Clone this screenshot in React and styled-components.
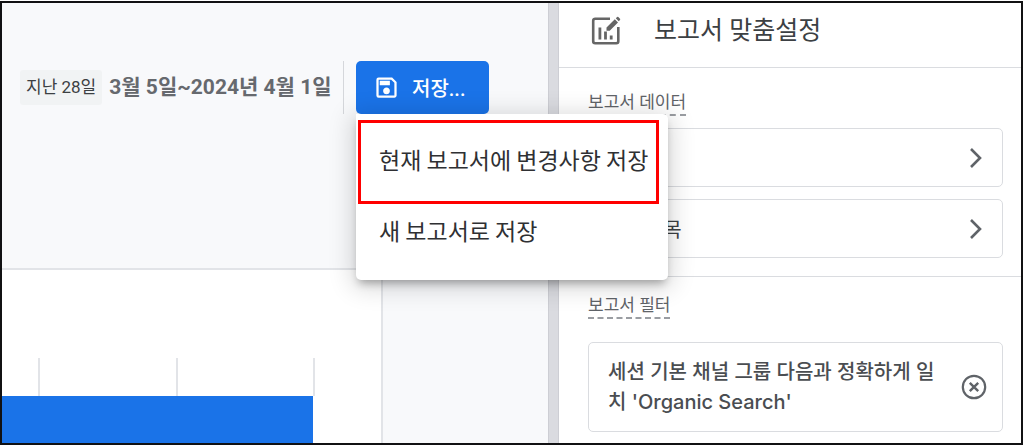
import React, {useState} from "react";
import styled, {createGlobalStyle} from "styled-components";
import {MdOutlineSave} from "react-icons/md";

const GlobalStyle = createGlobalStyle`
  * {
    box-sizing: border-box;
  }

  body {
    margin: 0;
    background-color: #ffffff;
    font-family: Roboto, "Noto Sans CJK KR", sans-serif;
    color: #3c4043;
  }

  button {
    margin: 0;
    padding: 0;
    border: none;
    background: none;
    font: inherit;
    color: inherit;
    cursor: pointer;
  }
`

const StyledPage = styled.div`
  min-height: 100vh;
  padding: 1px 1px 1px 0;
  display: flex;
`

const StyledFrame = styled.div`
  flex: 1;
  display: flex;
  border: 2px solid #111113;
`

const StyledReport = styled.main`
  flex: 13 1 0;
  min-width: 0;
  display: flex;
  flex-direction: column;
  background-color: #f8f9fb;
`

const StyledToolbar = styled.div`
  height: 265px;
  padding: 58px 0 0 18px;
  display: flex;
  align-items: flex-start;
  white-space: nowrap;

  .range {
    width: 324px;
    height: 53px;
    display: flex;
    align-items: center;
    gap: 7px;
    border-right: 1px solid #d5d7db;
  }

  .preset {
    padding: 0 6px;
    border-radius: 3px;
    background-color: #f1f3f4;
    font-size: 17px;
    line-height: 35px;
  }

  .dates {
    font-size: 21px;
    line-height: 35px;
    font-weight: 700;
    color: #66696e;
  }
`

const StyledSave = styled.div`
  position: relative;
  margin-left: 12px;
`

const StyledSaveButton = styled.button`
  height: 53px;
  padding: 0 24px 0 17px;
  display: flex;
  align-items: center;
  gap: 12px;
  border-radius: 5px;
  background-color: #1a73e8;
  color: #ffffff;
  font-size: 20px;
  font-weight: 500;
`

const StyledMenu = styled.div`
  position: absolute;
  z-index: 2;
  top: 100%;
  left: 0;
  width: 312px;
  padding: 9px 0 15px;
  display: flex;
  flex-direction: column;
  border-radius: 0 5px 5px 5px;
  background-color: #ffffff;
  box-shadow: 0 6px 8px -3px rgba(0, 0, 0, .3), 0 4px 24px 4px rgba(0, 0, 0, .16);

  .highlight {
    position: absolute;
    top: 6px;
    left: 2px;
    right: 9px;
    height: 84px;
    border: 3px solid #ff0000;
    pointer-events: none;
  }
`

const StyledMenuItem = styled.button`
  height: 71px;
  padding: 0 23px;
  text-align: left;
  font-family: "Noto Sans CJK KR", sans-serif;
  font-size: 23px;
  line-height: 32px;
  color: #2f3033;
`

const StyledChartCard = styled.section`
  flex: 1;
  margin-right: 165px;
  padding: 88px 66px 0 0;
  display: flex;
  flex-direction: column;
  border: 2px solid #e2e4e8;
  border-width: 2px 2px 0 0;
  background-color: #ffffff;

  .ticks {
    height: 38px;
    display: grid;
    grid-template-columns: 38px 1fr 1fr;
  }

  .tick {
    border-right: 2px solid #e2e4e8;
  }

  .bar {
    flex: 1;
    min-height: 40px;
    margin-right: 2px;
    background-color: #1a73e8;
  }
`

const StyledSplitter = styled.div`
  width: 11px;
  border: 1px solid #cdced4;
  border-width: 0 1px;
  background-color: #dadbe0;
`

const StyledPanel = styled.aside`
  flex: 11 1 0;
  min-width: 0;
  background-color: #ffffff;
`

const StyledPanelHeader = styled.header`
  height: 65px;
  padding: 0 18px 8px 32px;
  display: flex;
  align-items: center;
  gap: 33px;
  border-bottom: 1px solid #dadce0;

  h1 {
    margin: 0;
    font-size: 25px;
    line-height: 32px;
    font-weight: 400;
  }
`

const StyledSection = styled.section`
  padding: ${props => props.$top}px 18px 18px 29px;
  display: flex;
  flex-direction: column;
  align-items: stretch;
  gap: 12px;

  & + & {
    padding-bottom: 10px;
    border-top: 1px solid #dadce0;
  }

  h2 {
    align-self: flex-start;
    margin: 0 0 ${props => props.$labelGap}px;
    border-bottom: 2px dashed #9a9da2;
    font-size: 17px;
    line-height: 24px;
    font-weight: 400;
    color: #5f6368;
  }
`

const StyledRowButton = styled.button`
  height: 59px;
  padding: 0 19px;
  display: flex;
  align-items: center;
  justify-content: space-between;
  border: 1px solid #dadce0;
  border-radius: 5px;
  font-size: 20px;

  svg {
    margin-left: auto;
    color: #5f6368;
  }
`

const StyledFilter = styled.div`
  padding: 14px 15px 14px 19px;
  display: flex;
  align-items: center;
  justify-content: space-between;
  gap: 22px;
  border: 1px solid #dadce0;
  border-radius: 5px;
  font-family: Inter, "Noto Sans CJK KR", sans-serif;
  font-size: 20px;
  line-height: 30px;
  font-weight: 500;
  color: #4a4d51;

  p {
    margin: 0;
  }

  button {
    flex: none;
    display: flex;
    color: #5f6368;
  }
`

const CustomizeIcon = () => (
    <svg width="30" height="30" viewBox="0 0 30 30" fill="none" stroke="#666666" aria-hidden="true">
        <path d="M19 2.7H4.2a2 2 0 0 0-2 2v20.6a2 2 0 0 0 2 2h21.1a2 2 0 0 0 2-2V11" strokeWidth="2.6"/>
        <path d="M8.9 11.5v12M14.5 15.5v8M20.2 19.5v4" strokeWidth="2.8"/>
        <path d="M15.5 14.8v-3.2l8.3-8.3 3.2 3.2-8.3 8.3zM24.8 2.3l1.3-1.3q.6-.5 1.2 0l1.7 1.7q.5.6 0 1.2l-1.3 1.3z" fill="#666666" stroke="none"/>
    </svg>
)

const ChevronIcon = () => (
    <svg width="14" height="22" viewBox="0 0 14 22" fill="none" stroke="currentColor" aria-hidden="true">
        <path d="M2 2l9 9-9 9" strokeWidth="2.6"/>
    </svg>
)

const RemoveIcon = () => (
    <svg width="26" height="26" viewBox="0 0 26 26" fill="none" stroke="currentColor" aria-hidden="true">
        <circle cx="13" cy="13" r="11.2" strokeWidth="2.2"/>
        <path d="M8.8 8.8l8.4 8.4M17.2 8.8l-8.4 8.4" strokeWidth="2.4"/>
    </svg>
)

const SaveMenu = () => {
    const [open, setOpen] = useState(true)

    return (
        <StyledSave>
            <StyledSaveButton type="button" aria-expanded={open} onClick={() => setOpen(!open)}>
                <MdOutlineSave size={27}/>
                저장...
            </StyledSaveButton>
            {open && (
                <StyledMenu role="menu">
                    <StyledMenuItem type="button" role="menuitem">현재 보고서에 변경사항 저장</StyledMenuItem>
                    <StyledMenuItem type="button" role="menuitem">새 보고서로 저장</StyledMenuItem>
                    <div className={"highlight"}/>
                </StyledMenu>
            )}
        </StyledSave>
    )
}

const App = () => {
    const [filtered, setFiltered] = useState(true)

    return (
        <StyledPage>
            <GlobalStyle/>
            <StyledFrame>
                <StyledReport>
                    <StyledToolbar>
                        <div className={"range"}>
                            <span className={"preset"}>지난 28일</span>
                            <span className={"dates"}>3월 5일~2024년 4월 1일</span>
                        </div>
                        <SaveMenu/>
                    </StyledToolbar>
                    <StyledChartCard>
                        <div className={"ticks"}>
                            <div className={"tick"}/>
                            <div className={"tick"}/>
                            <div className={"tick"}/>
                        </div>
                        <div className={"bar"}/>
                    </StyledChartCard>
                </StyledReport>
                <StyledSplitter/>
                <StyledPanel>
                    <StyledPanelHeader>
                        <CustomizeIcon/>
                        <h1>보고서 맞춤설정</h1>
                    </StyledPanelHeader>
                    <StyledSection $top={22} $labelGap={0}>
                        <h2>보고서 데이터</h2>
                        <StyledRowButton type="button" aria-label="측정기준">
                            <ChevronIcon/>
                        </StyledRowButton>
                        <StyledRowButton type="button">
                            측정항목
                            <ChevronIcon/>
                        </StyledRowButton>
                    </StyledSection>
                    <StyledSection $top={16} $labelGap={11}>
                        <h2>보고서 필터</h2>
                        {filtered && (
                            <StyledFilter>
                                <p>세션 기본 채널 그룹 다음과 정확하게 일치 'Organic Search'</p>
                                <button type="button" aria-label="필터 삭제" onClick={() => setFiltered(false)}>
                                    <RemoveIcon/>
                                </button>
                            </StyledFilter>
                        )}
                    </StyledSection>
                </StyledPanel>
            </StyledFrame>
        </StyledPage>
    )
}

export default App
